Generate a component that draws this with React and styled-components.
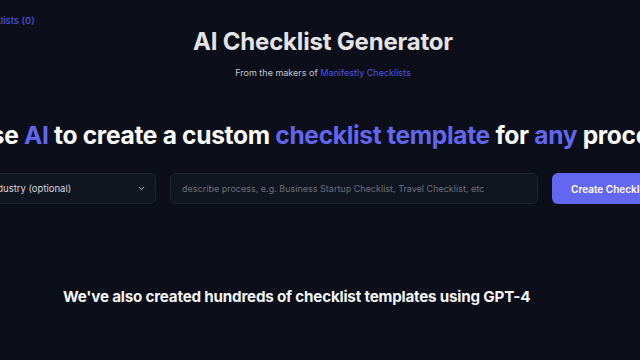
import styled, { createGlobalStyle } from "styled-components";

const GlobalStyle = createGlobalStyle`
  html, body {
    margin: 0;
    padding: 0;
    background: #0c0f19;
    overflow: hidden;
  }
  body {
    font-family: Inter, "Noto Sans", sans-serif;
  }
`;

const Page = styled.div`
  width: 640px;
  height: 360px;
  box-sizing: border-box;
  padding-left: 6px;
  display: flex;
  flex-direction: column;
  align-items: center;
  background: #0c0f19;
`;

const TopBar = styled.div`
  width: 740px;
  flex-shrink: 0;
  display: flex;
  padding: 15px 0 0 4px;
  height: 12px;
  line-height: 12px;
`;

const MyLink = styled.a`
  font-size: 9.5px;
  font-weight: 500;
  color: #4f52e0;
  text-decoration: none;
`;

const Title = styled.h1`
  margin: 0;
  font-size: 24px;
  line-height: 29px;
  font-weight: 700;
  letter-spacing: -0.2px;
  color: #e4e4e7;
  white-space: nowrap;
`;

const Sub = styled.p`
  margin: 11px 0 0;
  font-size: 9px;
  line-height: 12px;
  color: #c3c6d2;
  white-space: nowrap;
`;

const Accent = styled.span`
  color: ${({ $tone }) => $tone || "#6366f1"};
`;

const Headline = styled.h2`
  margin: 41px 0 0 4px;
  flex-shrink: 0;
  font-size: 24.5px;
  line-height: 30px;
  font-weight: 700;
  letter-spacing: -0.3px;
  color: #ffffff;
  white-space: nowrap;
`;

const FormRow = styled.div`
  margin-top: 23px;
  flex-shrink: 0;
  display: flex;
  gap: 14px;
  height: 31px;
`;

const Select = styled.div`
  width: 180px;
  box-sizing: border-box;
  display: flex;
  align-items: center;
  justify-content: space-between;
  padding: 0 9px 0 12px;
  background: #111520;
  border: 1px solid #1f2431;
  border-radius: 6px;
  font-size: 9.5px;
  color: #d4d6dd;
`;

const Input = styled.div`
  width: 368px;
  box-sizing: border-box;
  display: flex;
  align-items: center;
  padding: 0 11px;
  background: #111520;
  border: 1px solid #1f2431;
  border-radius: 6px;
  font-size: 9px;
  color: #6b6f7c;
  white-space: nowrap;
`;

const Button = styled.button`
  padding: 0 19px;
  border: none;
  border-radius: 6px;
  background: #6366f1;
  color: #ffffff;
  font-family: inherit;
  font-size: 10px;
  font-weight: 600;
  white-space: nowrap;
`;

const Bottom = styled.h3`
  align-self: stretch;
  margin: 83px 0 0;
  padding-left: 57px;
  font-size: 15.2px;
  line-height: 20px;
  font-weight: 700;
  letter-spacing: -0.2px;
  color: #f4f4f5;
  white-space: nowrap;
`;

const Chevron = () => (
  <svg width="9" height="9" viewBox="0 0 24 24" fill="none" stroke="#c9ccd4" strokeWidth="2.5" strokeLinecap="round" strokeLinejoin="round">
    <path d="M6 9l6 6 6-6" />
  </svg>
);

export default function App() {
  return (
    <>
      <GlobalStyle />
      <Page>
        <TopBar>
          <MyLink href="#">My Checklists (0)</MyLink>
        </TopBar>
        <Title>AI Checklist Generator</Title>
        <Sub>
          From the makers of <Accent $tone="#4f52e0">Manifestly Checklists</Accent>
        </Sub>
        <Headline>
          Use <Accent>AI</Accent> to create a custom <Accent>checklist template</Accent> for{" "}
          <Accent>any</Accent> process
        </Headline>
        <FormRow>
          <Select>
            <span>Industry (optional)</span>
            <Chevron />
          </Select>
          <Input>describe process, e.g. Business Startup Checklist, Travel Checklist, etc</Input>
          <Button>Create Checklist</Button>
        </FormRow>
        <Bottom>We've also created hundreds of checklist templates using GPT-4</Bottom>
      </Page>
    </>
  );
}
